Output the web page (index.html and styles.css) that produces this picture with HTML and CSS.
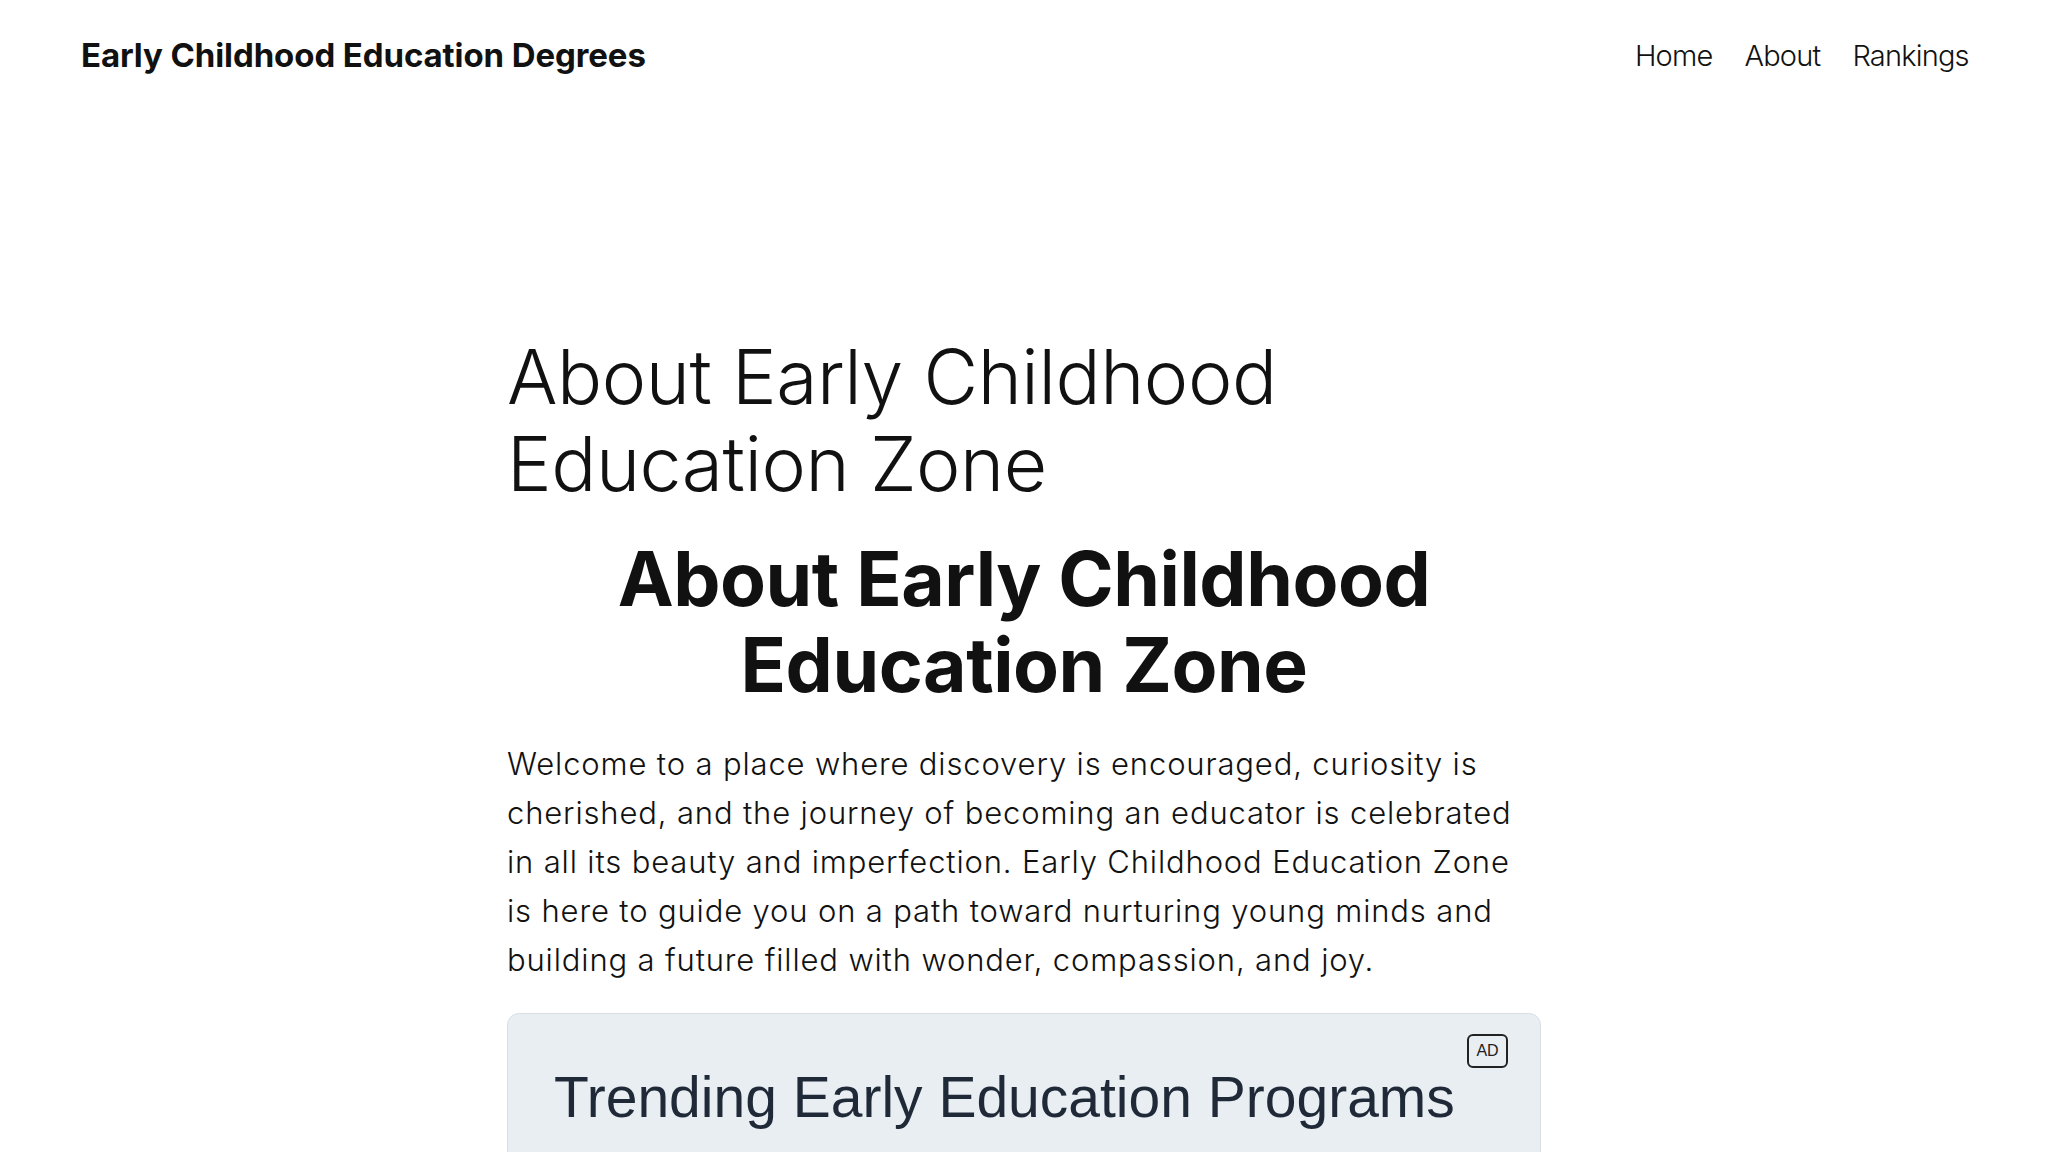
FILE: index.html
```html
<!DOCTYPE html>
<html lang="en">
<head>
<meta charset="utf-8">
<title>About Early Childhood Education Zone</title>
<link rel="stylesheet" href="styles.css">
</head>
<body>
<header class="site-header">
  <a class="brand" href="#">Early Childhood Education Degrees</a>
  <nav class="nav">
    <a href="#">Home</a>
    <a href="#">About</a>
    <a href="#">Rankings</a>
  </nav>
</header>
<main class="content">
  <h1 class="page-title">About Early Childhood Education Zone</h1>
  <h2 class="section-title">About Early Childhood Education Zone</h2>
  <p class="intro">Welcome to a place where discovery is encouraged, curiosity is cherished, and the journey of becoming an educator is celebrated in all its beauty and imperfection. Early Childhood Education Zone is here to guide you on a path toward nurturing young minds and building a future filled with wonder, compassion, and joy.</p>
  <section class="ad-box">
    <span class="ad-badge">AD</span>
    <h3 class="ad-title">Trending Early Education Programs</h3>
  </section>
</main>
</body>
</html>
```
FILE: styles.css
```css
* { box-sizing: border-box; }
html, body { margin: 0; padding: 0; }
body {
  background: #ffffff;
  color: #111111;
  font-family: Inter, "Noto Sans", sans-serif;
  overflow: hidden;
}
a { color: inherit; text-decoration: none; }

.site-header {
  display: flex;
  justify-content: space-between;
  align-items: center;
  height: 112px;
  padding: 0 80px 0 81px;
}
.brand {
  font-size: 33px;
  font-weight: 700;
  line-height: 1.2;
  letter-spacing: -0.1px;
}
.nav {
  display: flex;
  gap: 32px;
  font-size: 29px;
  font-weight: 300;
  line-height: 1.2;
  letter-spacing: -0.8px;
}
.nav a:last-child { margin-right: -0.8px; }

.content {
  width: 1034px;
  margin: 0 auto;
  padding-top: 221px;
}
.page-title {
  margin: 0;
  font-size: 75px;
  font-weight: 300;
  line-height: 87px;
  letter-spacing: -0.45px;
}
.section-title {
  margin: 29px 0 0;
  text-align: center;
  font-size: 75px;
  font-weight: 700;
  line-height: 86px;
  letter-spacing: -0.45px;
}
.intro {
  margin: 31px 0 0;
  font-size: 31px;
  font-weight: 300;
  line-height: 49px;
  letter-spacing: 0.85px;
}
.ad-box {
  position: relative;
  margin-top: 29px;
  background: #e9eef3;
  border: 1px solid #d9dee4;
  border-radius: 12px;
  padding: 50px 46px 60px;
}
.ad-badge {
  position: absolute;
  top: 20px;
  right: 32px;
  width: 41px;
  height: 34px;
  display: flex;
  align-items: center;
  justify-content: center;
  border: 2px solid #222;
  border-radius: 6px;
  font-family: "Liberation Sans", Arial, sans-serif;
  font-size: 16px;
  color: #222;
}
.ad-title {
  margin: 0;
  font-family: "Liberation Sans", Arial, sans-serif;
  font-size: 57px;
  font-weight: 400;
  color: #1f2937;
}
```
